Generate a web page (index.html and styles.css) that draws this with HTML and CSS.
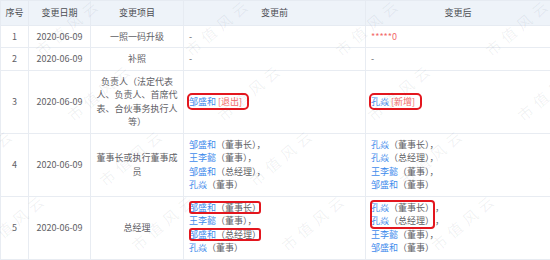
FILE: index.html
```html
<!DOCTYPE html>
<html lang="zh-CN">
<head>
<meta charset="utf-8">
<title>变更记录</title>
<link rel="stylesheet" href="styles.css">
</head>
<body>
<div class="sheet">
  <table class="changes">
    <colgroup>
      <col class="c-no"><col class="c-date"><col class="c-item"><col class="c-before"><col class="c-after">
    </colgroup>
    <thead>
      <tr><th>序号</th><th>变更日期</th><th>变更项目</th><th>变更前</th><th>变更后</th></tr>
    </thead>
    <tbody>
      <tr>
        <td class="ctr">1</td><td class="ctr">2020-06-09</td><td class="ctr">一照一码升级</td>
        <td class="txt">-</td><td class="txt"><span class="red">*****0</span></td>
      </tr>
      <tr>
        <td class="ctr">2</td><td class="ctr">2020-06-09</td><td class="ctr">补照</td>
        <td class="txt">-</td><td class="txt">-</td>
      </tr>
      <tr>
        <td class="ctr">3</td><td class="ctr">2020-06-09</td><td class="ctr">负责人（法定代表人、负责人、首席代表、合伙事务执行人等）</td>
        <td class="txt"><span class="mark mark-lg"><span class="name">邹盛和</span> <span class="red">[退出]</span></span></td>
        <td class="txt"><span class="mark mark-lg"><span class="name">孔焱</span> <span class="red">[新增]</span></span></td>
      </tr>
      <tr>
        <td class="ctr">4</td><td class="ctr">2020-06-09</td><td class="ctr">董事长或执行董事成员</td>
        <td class="txt">
          <div><span class="name">邹盛和</span>（董事长），</div>
          <div><span class="name">王李懿</span>（董事），</div>
          <div><span class="name">邹盛和</span>（总经理），</div>
          <div><span class="name">孔焱</span>（董事）</div>
        </td>
        <td class="txt">
          <div><span class="name">孔焱</span>（董事长），</div>
          <div><span class="name">孔焱</span>（总经理），</div>
          <div><span class="name">王李懿</span>（董事），</div>
          <div><span class="name">邹盛和</span>（董事）</div>
        </td>
      </tr>
      <tr>
        <td class="ctr">5</td><td class="ctr">2020-06-09</td><td class="ctr">总经理</td>
        <td class="txt">
          <div><span class="mark mark-sm"><span class="name">邹盛和</span>（董事长）</span></div>
          <div><span class="name">王李懿</span>（董事），</div>
          <div><span class="mark mark-sm"><span class="name">邹盛和</span>（总经理）</span></div>
          <div><span class="name">孔焱</span>（董事）</div>
        </td>
        <td class="txt">
          <div class="group">
            <div class="mark mark-grp">
              <div><span class="name">孔焱</span>（董事长）</div>
              <div><span class="name">孔焱</span>（总经理）</div>
            </div>
            <div class="commas"><div>，</div><div>，</div></div>
          </div>
          <div><span class="name">王李懿</span>（董事），</div>
          <div><span class="name">邹盛和</span>（董事）</div>
        </td>
      </tr>
    </tbody>
  </table>

  <div class="watermarks" aria-hidden="true">
    <div class="wm-row"><span class="wm">市值风云</span><span class="wm">市值风云</span><span class="wm">市值风云</span><span class="wm">市值风云</span><span class="wm">市值风云</span><span class="wm">市值风云</span></div>
    <div class="wm-row"><span class="wm">市值风云</span><span class="wm">市值风云</span><span class="wm">市值风云</span><span class="wm">市值风云</span><span class="wm">市值风云</span><span class="wm">市值风云</span></div>
    <div class="wm-row"><span class="wm">市值风云</span><span class="wm">市值风云</span><span class="wm">市值风云</span><span class="wm">市值风云</span><span class="wm">市值风云</span><span class="wm">市值风云</span></div>
    <div class="wm-row"><span class="wm">市值风云</span><span class="wm">市值风云</span><span class="wm">市值风云</span><span class="wm">市值风云</span><span class="wm">市值风云</span><span class="wm">市值风云</span></div>
    <div class="wm-row"><span class="wm">市值风云</span><span class="wm">市值风云</span><span class="wm">市值风云</span><span class="wm">市值风云</span><span class="wm">市值风云</span><span class="wm">市值风云</span></div>
  </div>
</div>
</body>
</html>
```
FILE: styles.css
```css
* { box-sizing: border-box; }

html, body {
  margin: 0;
  padding: 0;
  background: #ffffff;
}

body {
  font-family: "Noto Sans CJK SC", "Noto Sans", sans-serif;
  font-size: 9px;
  line-height: 13.5px;
  color: #5f6166;
}

.sheet {
  position: relative;
  width: 550px;
  height: 260px;
  overflow: hidden;
}

.changes {
  width: 550px;
  border-collapse: collapse;
  table-layout: fixed;
}

.c-no { width: 28px; }
.c-date { width: 62px; }
.c-item { width: 93px; }
.c-before { width: 182px; }
.c-after { width: 185px; }

th {
  background: #eef3f9;
  color: #4b4d52;
  font-weight: normal;
  text-align: center;
  padding: 5px 4px;
  border: 1px solid #e6ebf2;
}

td {
  padding: 4px 4px;
  border: 1px solid #e8ecf2;
  vertical-align: middle;
}

td.ctr { text-align: center; }
td.txt { text-align: left; padding-left: 5px; }

.name { color: #3f8cec; }
.red { color: #f26b6b; }

.mark {
  display: inline-block;
  outline: 2px solid #e3161e;
  border-radius: 3px;
}

.mark-lg {
  outline-offset: 0;
  padding-right: 5px;
}

.mark-sm {
  outline-offset: -2px;
  border-radius: 3px;
}

.group {
  display: flex;
}

.mark-grp {
  outline-offset: -1px;
}

.commas {
  padding-left: 1px;
}

.watermarks {
  position: absolute;
  top: -6px;
  left: 0;
  right: 0;
  bottom: -80px;
  pointer-events: none;
  display: flex;
  flex-direction: column;
}

.wm-row {
  display: flex;
  height: 65px;
  flex: none;
  margin-left: -157px;
}

.wm-row:nth-child(2) { margin-left: -125px; }
.wm-row:nth-child(3) { margin-left: -93px; }
.wm-row:nth-child(4) { margin-left: -61px; }
.wm-row:nth-child(5) { margin-left: -29px; }

.wm {
  flex: none;
  width: 150px;
  height: 65px;
  display: flex;
  align-items: center;
  justify-content: center;
  font-family: "Noto Sans CJK SC", sans-serif;
  font-size: 15px;
  letter-spacing: 5px;
  color: rgba(60, 70, 90, 0.07);
  transform: rotate(-40deg);
  white-space: nowrap;
}
```
